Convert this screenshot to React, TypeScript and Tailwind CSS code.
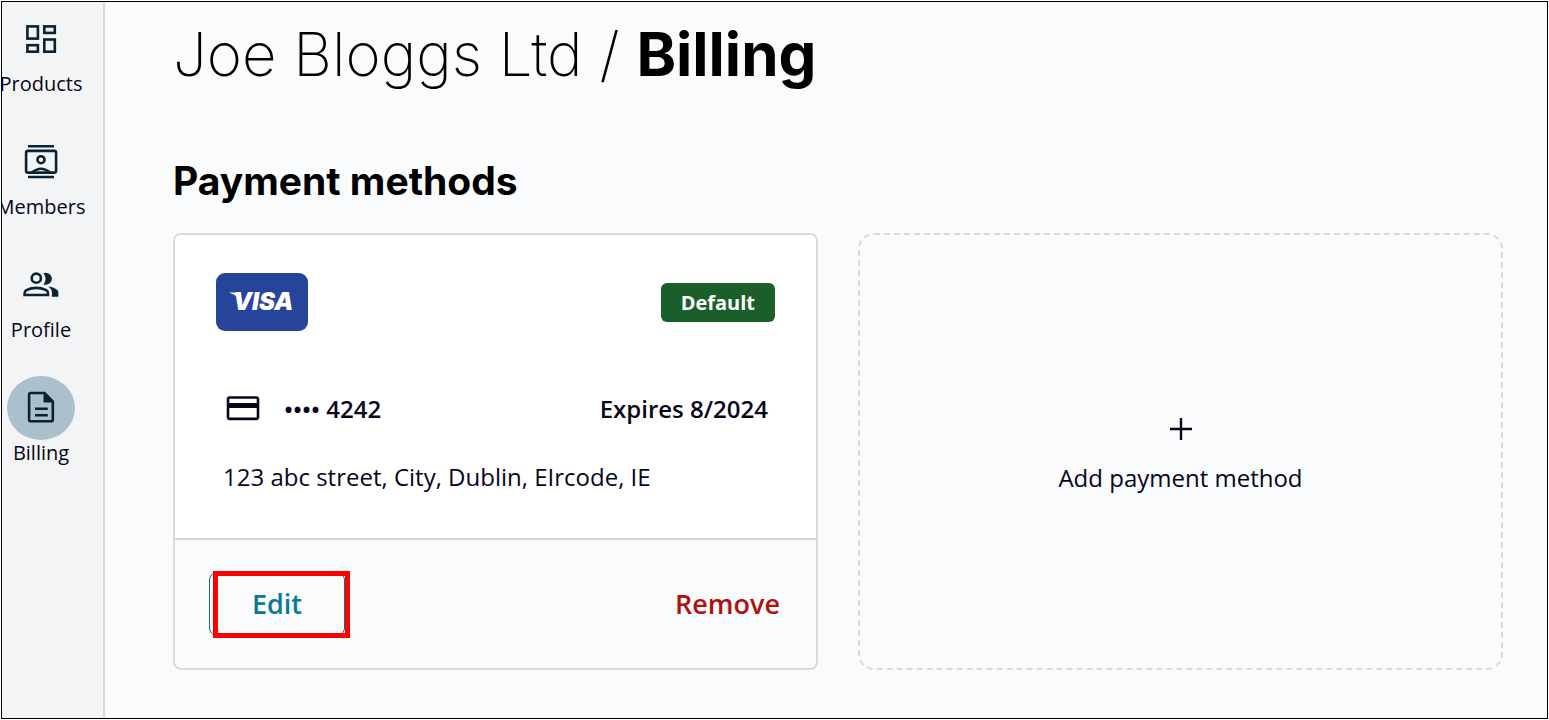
import type { ReactNode } from "react";

function Icon({ children }: { children: ReactNode }) {
  return (
    <svg
      className="w-[39px] h-9 shrink-0"
      viewBox="0 0 39 36"
      fill="none"
      stroke="currentColor"
      strokeWidth="2.6"
      aria-hidden="true"
    >
      {children}
    </svg>
  );
}

function ProductsIcon() {
  return (
    <Icon>
      <rect x="5.400" y="5.400" width="10.500" height="12.200" />
      <rect x="22.300" y="5.400" width="10.500" height="6.500" />
      <rect x="5.400" y="24.200" width="10.500" height="6.500" />
      <rect x="22.300" y="18.500" width="10.500" height="12.200" />
    </Icon>
  );
}

function MembersIcon() {
  return (
    <Icon>
      <path d="M6 2.200h26M6 33h26" />
      <rect x="4.100" y="6.900" width="30" height="21.700" rx="1.800" />
      <circle cx="19" cy="15.700" r="3.500" />
      <path d="M9.500 29Q19 20.500 28.500 29" />
    </Icon>
  );
}

function ProfileIcon() {
  return (
    <Icon>
      <circle cx="14.300" cy="11.200" r="4.600" />
      <path d="M2.600 28V26.200q0-2 1.800-3Q14.300 18.500 24.200 23.200q1.800 1 1.800 3V28z" />
      <g transform="scale(0.04 0.0375) translate(-12 956)" fill="currentColor" stroke="none">
        <path d="M760-160v-120q0-44-24.500-84.500T666-434q51 6 96 20.500t84 35.500q36 20 55 44.500t19 53.500v120H760Z" />
        <path d="M760-640q0 66-47 113t-113 47q-11 0-28-2.500t-28-5.500q27-32 41.500-71t14.500-81q0-42-14.500-81T544-792q14-5 28-6.500t28-1.500q66 0 113 47t47 113Z" />
      </g>
    </Icon>
  );
}

function BillingIcon() {
  return (
    <Icon>
      <path d="M9 3h13.500l8.300 8.600v17.800q0 1.900-1.900 1.900H9q-1.900 0-1.900-1.900V4.900q0-1.900 1.900-1.900z" />
      <path d="M22 2.800v9.200h9z" fill="currentColor" strokeWidth="1" />
      <path d="M13 18.700h12.800M13 25.300h12.800" />
    </Icon>
  );
}

function CardIcon() {
  return (
    <Icon>
      <rect x="5" y="6.500" width="30" height="21.400" rx="1.800" />
      <path d="M5 14.500h30" strokeWidth="5" />
    </Icon>
  );
}

const navItems = [
  { label: "Products", icon: <ProductsIcon />, active: false },
  { label: "Members", icon: <MembersIcon />, active: false },
  { label: "Profile", icon: <ProfileIcon />, active: false },
  { label: "Billing", icon: <BillingIcon />, active: true },
];

function Sidebar() {
  return (
    <nav className="w-[103px] shrink-0 overflow-hidden bg-[#f3f4f6] border-r-2 border-[#d6d8da] pt-[5px] pr-[23px]">
      <ul className="flex flex-col items-center gap-[33px]">
        {navItems.map((item) => (
          <li key={item.label}>
            <a href="#" className="flex flex-col items-center text-[#0b2233]">
              <span
                className={
                  item.active
                    ? "w-[68px] h-16 rounded-[50%] flex items-center justify-center bg-[#acbfcd]"
                    : "w-[68px] h-16 rounded-[50%] flex items-center justify-center"
                }
              >
                {item.icon}
              </span>
              <span className="text-[20px] leading-[26px] text-[#06061a] whitespace-nowrap">
                {item.label}
              </span>
            </a>
          </li>
        ))}
      </ul>
    </nav>
  );
}

function VisaLogo() {
  return (
    <svg className="w-[92px] h-[58px]" viewBox="0 0 92 58" role="img" aria-label="Visa">
      <rect width="92" height="58" rx="9" fill="#26459a" />
      <path d="M13 19.600h8.500q2.500 0 3 2.500l1.500 8.500q-3-7.500-13-11z" fill="#fff" />
      <text
        x="17"
        y="37"
        fill="#fff"
        fontFamily="Inter, sans-serif"
        fontSize="24"
        fontWeight="900"
        fontStyle="italic"
      >
        VISA
      </text>
    </svg>
  );
}

function PaymentCard() {
  return (
    <article className="flex flex-col rounded-lg border-2 border-[#d8dade] overflow-hidden">
      <div className="bg-white pt-[38px] px-[41px] pb-[41px]">
        <div className="flex items-center justify-between">
          <VisaLogo />
          <span className="rounded-md bg-[#1a5e2a] px-5 py-1 text-[20px] leading-[31px] font-bold text-white">
            Default
          </span>
        </div>
        <div className="mt-[58px] flex items-center px-[7px] text-[24px] leading-10 font-semibold">
          <CardIcon />
          <span className="ml-[22px]">•••• 4242</span>
          <span className="ml-auto">Expires 8/2024</span>
        </div>
        <p className="mt-7 px-[7px] text-[24px] leading-10">123 abc street, City, Dublin, EIrcode, IE</p>
      </div>
      <div className="flex items-center justify-between border-t-2 border-[#d6d8da] py-8 pl-[34px] pr-9">
        <button
          type="button"
          className="relative w-[136px] h-16 rounded-lg border border-[#0b7285] text-[27px] font-semibold text-[#087a94]"
        >
          Edit
          {/* highlight frame */}
          <span className="absolute -top-0.5 left-[3px] w-[137px] h-[67px] border-[5px] border-[#ff0000]" />
        </button>
        <button type="button" className="text-[27px] font-semibold text-[#b01010]">
          Remove
        </button>
      </div>
    </article>
  );
}

export default function App() {
  return (
    <div className="min-h-screen flex bg-white p-px font-['Open_Sans',sans-serif] text-[#06061a]">
      <div className="flex flex-1 border border-black bg-[#fafbfd]">
        <Sidebar />
        <main className="flex-1 pt-4 pl-[68px] pr-11 pb-10">
          <h1 className="font-['Inter',sans-serif] text-[60px] leading-[72px] font-extralight text-black">
            Joe Bloggs Ltd / <strong className="font-bold">Billing</strong>
          </h1>
          <section>
            <h2 className="mt-[67px] font-['Inter',sans-serif] text-[39px] leading-[48px] font-bold text-black">
              Payment methods
            </h2>
            <div className="mt-7 grid grid-cols-2 gap-10">
              <PaymentCard />
              <button
                type="button"
                className="flex flex-col items-center justify-center rounded-2xl border-2 border-dashed border-[#d8dade] pt-3"
              >
                <svg className="w-[22px] h-[22px]" viewBox="0 0 22 22" stroke="currentColor" strokeWidth="2.400" aria-hidden="true">
                  <path d="M11 0v22M0 11h22" />
                </svg>
                <span className="mt-[18px] text-[24px] leading-10">Add payment method</span>
              </button>
            </div>
          </section>
        </main>
      </div>
    </div>
  );
}
